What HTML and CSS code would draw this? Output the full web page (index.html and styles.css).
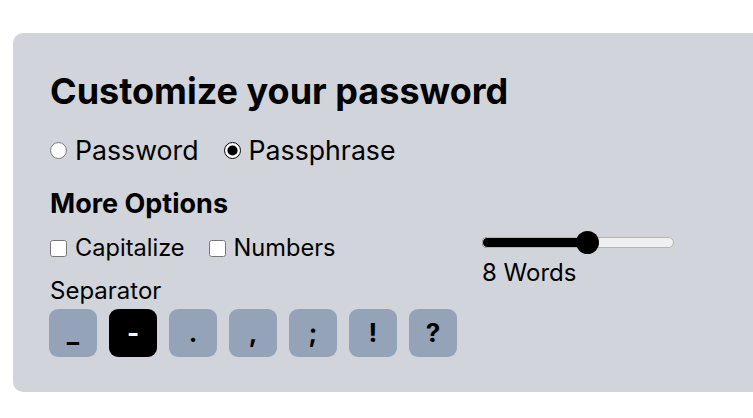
FILE: index.html
```html
<!DOCTYPE html>
<html>
<head>
<meta charset="utf-8">
<link rel="stylesheet" href="styles.css">
</head>
<body>
<section class="panel">
  <h2 class="title">Customize your password</h2>
  <div class="radios">
    <label class="opt"><input type="radio" name="kind"> Password</label>
    <label class="opt"><input type="radio" name="kind" checked> Passphrase</label>
  </div>
  <h3 class="subtitle">More Options</h3>
  <div class="options">
    <div class="left">
      <div class="checks">
        <label class="chk"><input type="checkbox"> Capitalize</label>
        <label class="chk"><input type="checkbox"> Numbers</label>
      </div>
      <div class="sep-label">Separator</div>
      <div class="seps">
        <button class="sep">_</button>
        <button class="sep active">-</button>
        <button class="sep">.</button>
        <button class="sep">,</button>
        <button class="sep">;</button>
        <button class="sep">!</button>
        <button class="sep">?</button>
      </div>
    </div>
    <div class="right">
      <input class="range" type="range" min="3" max="12" value="8" style="--fill: 55.6%">
      <div class="words">8 Words</div>
    </div>
  </div>
</section>
</body>
</html>
```
FILE: styles.css
```css
* { box-sizing: border-box; }
body {
  margin: 0;
  padding: 33px 0 0 13px;
  font-family: Inter, "Noto Sans", sans-serif;
  color: #000;
  background: #fff;
  overflow: hidden;
}
.panel {
  background: #d1d5db;
  border-radius: 10px;
  width: 760px;
  height: 359px;
  padding: 36px 36px;
}
.title {
  margin: 0;
  font-size: 36px;
  font-weight: 700;
  line-height: 44px;
  padding-left: 1px;
}
.radios {
  display: flex;
  gap: 25px;
  margin-top: 21px;
  padding-left: 1px;
}
.opt, .chk {
  display: flex;
  align-items: center;
  gap: 8px;
  font-size: 26.7px;
  line-height: 32px;
}
.chk { font-size: 23.6px; line-height: 30px; }
input[type=radio], input[type=checkbox] {
  width: 17px;
  height: 17px;
  margin: 0;
  accent-color: #000;
}
.subtitle {
  margin: 22px 0 0;
  font-size: 27px;
  font-weight: 700;
  line-height: 32px;
  padding-left: 1px;
}
.options {
  display: flex;
  gap: 25px;
  margin-top: 13px;
}
.checks { display: flex; gap: 24px; padding-left: 1px; }
.sep-label {
  font-size: 24px;
  line-height: 28px;
  margin-top: 14px;
  padding-left: 1px;
}
.seps {
  display: flex;
  gap: 12px;
  margin-top: 4px;
}
.sep {
  width: 48px;
  height: 48px;
  border: none;
  border-radius: 9px;
  background: #94a3b8;
  font-family: Inter, "Noto Sans", sans-serif;
  font-size: 26px;
  font-weight: 700;
  line-height: 48px;
  color: #000;
  padding: 0;
}
.sep.active { background: #000; color: #fff; }
.right { margin-top: -2px; }
.range {
  -webkit-appearance: none;
  appearance: none;
  width: 192px;
  height: 23px;
  margin: 0;
  display: block;
  background: transparent;
}
.range::-webkit-slider-runnable-track {
  height: 11px;
  border-radius: 6px;
  background: linear-gradient(to right, #000 0, #000 var(--fill), #efefef var(--fill), #efefef 100%);
  box-shadow: inset 0 0 0 1px #b5b5b5;
}
.range::-webkit-slider-thumb {
  -webkit-appearance: none;
  width: 23px;
  height: 23px;
  border-radius: 50%;
  background: #000;
  margin-top: -6px;
}
.words {
  font-size: 24px;
  line-height: 28px;
  margin-top: 5px;
}
```
